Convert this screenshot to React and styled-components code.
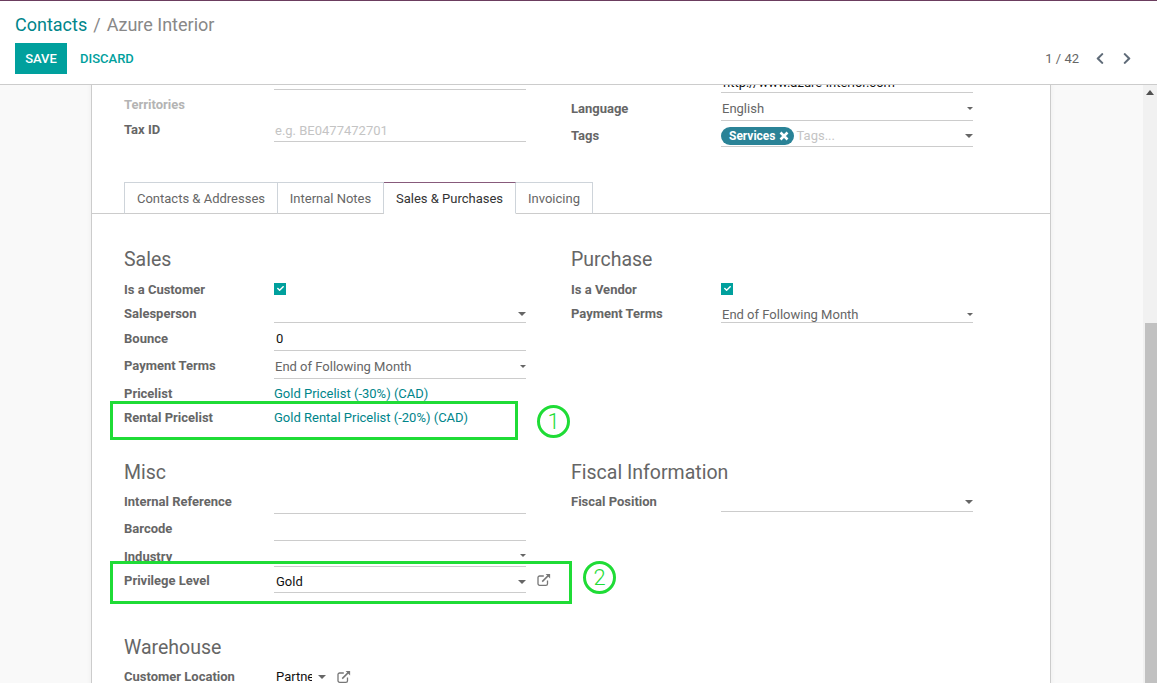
import React from 'react';
import styled, { createGlobalStyle } from 'styled-components';
import { FaCheck, FaChevronLeft, FaChevronRight } from 'react-icons/fa';

const GlobalStyle = createGlobalStyle`
  html, body { margin: 0; padding: 0; height: 100%; }
  body { font-family: Roboto, "Noto Sans", sans-serif; font-size: 13px; color: #666; background: #fff; }
`;

const Page = styled.div`
  height: 683px;
  display: flex;
  flex-direction: column;
  overflow: hidden;
`;

const ControlPanel = styled.header`
  flex: none;
  box-sizing: border-box;
  height: 85px;
  border-top: 1px solid #6b3d5e;
  border-bottom: 1px solid #ccc;
  padding: 0 15px;
  display: flex;
  flex-direction: column;
`;

const Breadcrumb = styled.div`
  box-sizing: border-box;
  height: 42px;
  padding-top: 4px;
  display: flex;
  align-items: center;
  gap: 6px;
  font-size: 18px;
  color: #888;
`;

const Crumb = styled.span`
  color: ${({ $link }) => ($link ? '#00858a' : '#888')};
`;

const ButtonRow = styled.div`
  display: flex;
  align-items: center;
  justify-content: space-between;
`;

const Buttons = styled.div`
  display: flex;
  align-items: center;
  gap: 13px;
`;

const SaveButton = styled.button`
  width: 52px;
  height: 31px;
  padding: 0;
  border: none;
  background: #00a09d;
  color: #fff;
  font: 500 13px Roboto, sans-serif;
`;

const DiscardButton = styled.button`
  padding: 0;
  border: none;
  background: none;
  color: #00a09d;
  font: 500 13px Roboto, sans-serif;
`;

const Pager = styled.div`
  display: flex;
  align-items: center;
  margin-right: 2px;
  color: #666;
  font-size: 13px;
  svg { width: 12px; height: 13px; color: #5f6b78; }
`;

const PagerValue = styled.span`
  margin-right: 7px;
`;

const PagerArrow = styled.span`
  display: flex;
  width: 27px;
  justify-content: center;
`;

const Body = styled.div`
  flex: 1;
  min-height: 0;
  display: flex;
  overflow: hidden;
  background: #f9f9f9;
`;

const Main = styled.main`
  flex: 1;
  min-width: 0;
  overflow: hidden;
`;

const Sheet = styled.div`
  box-sizing: border-box;
  width: 960px;
  margin-left: 91px;
  margin-top: -19px;
  background: #fff;
  border-left: 1px solid #ccc;
  border-right: 1px solid #ccc;
  box-shadow: 0 0 6px rgba(0, 0, 0, 0.05);
`;

const Columns = styled.div`
  display: grid;
  grid-template-columns: 447px 447px;
  padding-left: 32px;
`;

const Column = styled.div`
  display: flex;
  flex-direction: column;
  min-width: 0;
`;

const Row = styled.div`
  position: relative;
  display: grid;
  grid-template-columns: 150px 252px auto;
  align-items: center;
  height: ${({ $h }) => $h}px;
`;

const Label = styled.label`
  font-weight: 700;
  font-size: 13px;
  color: ${({ $muted }) => ($muted ? '#b4b4b4' : '#666')};
  position: relative;
  top: ${({ $shift }) => $shift || 0}px;
`;

const Field = styled.div`
  align-self: stretch;
  box-sizing: border-box;
  display: flex;
  align-items: center;
  justify-content: space-between;
  border-bottom: 1px solid #ccc;
  padding: ${({ $pt }) => $pt ?? 4}px 0 0 ${({ $strong }) => ($strong ? 2 : 1)}px;
  font-size: 13px;
  color: ${({ $strong }) => ($strong ? '#111' : '#666')};
  white-space: nowrap;
  overflow: hidden;
`;

const Placeholder = styled.span`
  color: #c4c4c4;
`;

const Caret = styled.span`
  flex: none;
  width: 0;
  height: 0;
  margin-left: auto;
  border-left: ${({ $big }) => ($big ? 4.5 : 3.5)}px solid transparent;
  border-right: ${({ $big }) => ($big ? 4.5 : 3.5)}px solid transparent;
  border-top: ${({ $big }) => ($big ? 4 : 3)}px solid #666;
`;

const TagValue = styled.span`
  display: inline-flex;
  align-items: center;
  gap: 3px;
  height: 18px;
  padding: 0 5px 0 8px;
  margin-left: -1px;
  margin-right: 3px;
  border-radius: 9px;
  background: #2a8397;
  color: #fff;
  font-size: 12px;
  font-weight: 700;
`;

const CheckBox = styled.span`
  width: 12px;
  height: 12px;
  margin-top: -2px;
  background: #00a09d;
  color: #fff;
  display: flex;
  align-items: center;
  justify-content: center;
  svg { width: 7px; height: 7px; }
`;

const LinkValue = styled.a`
  position: relative;
  top: ${({ $shift }) => $shift || 0}px;
  color: #00858a;
  font-size: 13px;
  white-space: nowrap;
`;

const Tabs = styled.nav`
  display: flex;
  margin-top: 35px;
  height: 32px;
  padding-left: 32px;
  border-bottom: 1px solid #ccc;
  box-sizing: border-box;
`;

const Tab = styled.div`
  box-sizing: border-box;
  height: 32px;
  width: ${({ $w }) => $w}px;
  display: flex;
  align-items: center;
  justify-content: center;
  background: #fff;
  border: 1px solid #ced4da;
  border-left-width: ${({ $first }) => ($first ? 1 : 0)}px;
  border-bottom-color: ${({ $active }) => ($active ? '#fff' : '#ccc')};
  border-top-color: ${({ $active }) => ($active ? '#875a7b' : '#ced4da')};
  color: ${({ $active }) => ($active ? '#333' : '#666')};
  font-size: 13px;
`;

const SectionTitle = styled.h2`
  margin: 0;
  box-sizing: border-box;
  height: ${({ $h }) => $h}px;
  padding-bottom: ${({ $pb }) => $pb || 0}px;
  display: flex;
  align-items: flex-end;
  font-size: 19.5px;
  line-height: 28px;
  font-weight: 400;
  color: #666;
`;

const Spacer = styled.div`
  height: ${({ $h }) => $h}px;
`;

const OutlineBox = styled.div`
  position: absolute;
  box-sizing: border-box;
  left: -14px;
  top: ${({ $top }) => $top}px;
  width: ${({ $w }) => $w}px;
  height: ${({ $h }) => $h}px;
  border: 3px solid #1fdc36;
  pointer-events: none;
`;

const Bubble = styled.div`
  position: absolute;
  box-sizing: border-box;
  left: ${({ $left }) => $left}px;
  top: ${({ $top }) => $top}px;
  width: 33px;
  height: 33px;
  border: 3px solid #1fdc36;
  border-radius: 50%;
  background: #fff;
  color: #1fdc36;
  display: flex;
  align-items: center;
  justify-content: center;
  font-size: 22px;
  font-weight: 300;
`;

const ExternalButton = styled.span`
  margin-left: 11px;
  display: flex;
  color: #777;
`;

const ShortValue = styled.span`
  display: inline-block;
  width: 36px;
  overflow: hidden;
  margin-left: 2px;
  color: #111;
`;

const ShortCaret = styled(Caret)`
  margin-left: 6px;
`;

const ShortField = styled.div`
  display: flex;
  align-items: center;
  white-space: nowrap;
`;

const Scrollbar = styled.div`
  position: relative;
  flex: none;
  width: 14px;
  background: #f1f1f1;
`;

const ScrollUp = styled.span`
  position: absolute;
  left: 3px;
  top: 5px;
  width: 0;
  height: 0;
  border-left: 4px solid transparent;
  border-right: 4px solid transparent;
  border-bottom: 5px solid #505050;
`;

const ScrollThumb = styled.div`
  position: absolute;
  left: 2px;
  right: 0;
  top: 238px;
  bottom: 0;
  background: #c1c1c1;
`;

const ExternalIcon = () => (
  <svg width="14" height="14" viewBox="0 0 14 14" fill="none" stroke="currentColor" strokeWidth="1.3">
    <path d="M10.5 7.5v3.2a1.6 1.6 0 0 1-1.6 1.6H2.6A1.6 1.6 0 0 1 1 10.7V4.6A1.6 1.6 0 0 1 2.6 3h4.2" />
    <path d="M5.2 8.6 12.2 1.6" strokeWidth="1.5" />
    <path d="M8.6 0.9h4.5v4.5z" fill="currentColor" stroke="none" />
  </svg>
);

const RemoveIcon = () => (
  <svg width="10" height="10" viewBox="0 0 10 10" fill="none" stroke="currentColor" strokeWidth="2.6">
    <path d="M1.5 1.5l7 7M8.5 1.5l-7 7" />
  </svg>
);

const App = () => (
  <Page>
    <GlobalStyle />
    <ControlPanel>
      <Breadcrumb>
        <Crumb $link>Contacts</Crumb>
        <Crumb>/</Crumb>
        <Crumb>Azure Interior</Crumb>
      </Breadcrumb>
      <ButtonRow>
        <Buttons>
          <SaveButton>SAVE</SaveButton>
          <DiscardButton>DISCARD</DiscardButton>
        </Buttons>
        <Pager>
          <PagerValue>1 / 42</PagerValue>
          <PagerArrow><FaChevronLeft /></PagerArrow>
          <PagerArrow><FaChevronRight /></PagerArrow>
        </Pager>
      </ButtonRow>
    </ControlPanel>
    <Body>
      <Main>
        <Sheet>
          <Columns>
            <Column>
              <Row $h={24}><span /><Field /></Row>
              <Row $h={28}><Label $muted>Territories</Label></Row>
              <Row $h={24}>
                <Label $shift={-1}>Tax ID</Label>
                <Field $pt={2}><Placeholder>e.g. BE0477472701</Placeholder></Field>
              </Row>
            </Column>
            <Column>
              <Row $h={27}><span /><Field $strong $pt={6}>http://www.azure-interior.com</Field></Row>
              <Row $h={28}>
                <Label $shift={1}>Language</Label>
                <Field>English<Caret /></Field>
              </Row>
              <Row $h={26}>
                <Label $shift={1}>Tags</Label>
                <Field>
                  <TagValue>Services <RemoveIcon /></TagValue>
                  <Placeholder>Tags...</Placeholder>
                  <Caret $big />
                </Field>
              </Row>
            </Column>
          </Columns>

          <Tabs>
            <Tab $first $w={154}>Contacts &amp; Addresses</Tab>
            <Tab $w={106}>Internal Notes</Tab>
            <Tab $active $w={132}>Sales &amp; Purchases</Tab>
            <Tab $w={77}>Invoicing</Tab>
          </Tabs>

          <Columns>
            <Column>
              <SectionTitle $h={64} $pb={4}>Sales</SectionTitle>
              <Row $h={23}>
                <Label>Is a Customer</Label>
                <CheckBox><FaCheck /></CheckBox>
              </Row>
              <Row $h={22}>
                <Label $shift={1}>Salesperson</Label>
                <Field><Caret $big /></Field>
              </Row>
              <Row $h={28}>
                <Label $shift={1}>Bounce</Label>
                <Field $strong>0</Field>
              </Row>
              <Row $h={28}>
                <Label>Payment Terms</Label>
                <Field>End of Following Month<Caret /></Field>
              </Row>
              <Row $h={27}>
                <Label $shift={1}>Pricelist</Label>
                <LinkValue $shift={1}>Gold Pricelist (-30%) (CAD)</LinkValue>
              </Row>
              <Row $h={23}>
                <Label>Rental Pricelist</Label>
                <LinkValue>Gold Rental Pricelist (-20%) (CAD)</LinkValue>
                <OutlineBox $top={-5} $w={408} $h={39} />
                <Bubble $left={413} $top={-1}>1</Bubble>
              </Row>
            </Column>
            <Column>
              <SectionTitle $h={64} $pb={4}>Purchase</SectionTitle>
              <Row $h={23}>
                <Label>Is a Vendor</Label>
                <CheckBox><FaCheck /></CheckBox>
              </Row>
              <Row $h={22}>
                <Label $shift={1}>Payment Terms</Label>
                <Field $pt={6}>End of Following Month<Caret /></Field>
              </Row>
            </Column>
          </Columns>

          <Columns>
            <Column>
              <SectionTitle $h={59} $pb={1}>Misc</SectionTitle>
              <Row $h={26}><Label>Internal Reference</Label><Field /></Row>
              <Row $h={27}><Label $shift={1}>Barcode</Label><Field /></Row>
              <Row $h={26}>
                <Label $shift={2}>Industry</Label>
                <Field><Caret /></Field>
              </Row>
              <Row $h={26}>
                <Label>Privilege Level</Label>
                <Field $strong>Gold<Caret $big /></Field>
                <ExternalButton><ExternalIcon /></ExternalButton>
                <OutlineBox $top={-6} $w={462} $h={43} />
                <Bubble $left={459} $top={-6}>2</Bubble>
              </Row>
              <SectionTitle $h={69}>Warehouse</SectionTitle>
              <Spacer $h={1} />
              <Row $h={27}>
                <Label>Customer Location</Label>
                <ShortField>
                  <ShortValue>Partner</ShortValue>
                  <ShortCaret $big />
                  <ExternalButton><ExternalIcon /></ExternalButton>
                </ShortField>
              </Row>
            </Column>
            <Column>
              <SectionTitle $h={59} $pb={1}>Fiscal Information</SectionTitle>
              <Row $h={24}>
                <Label $shift={1}>Fiscal Position</Label>
                <Field><Caret $big /></Field>
              </Row>
            </Column>
          </Columns>
        </Sheet>
      </Main>
      <Scrollbar>
        <ScrollUp />
        <ScrollThumb />
      </Scrollbar>
    </Body>
  </Page>
);

export default App;
